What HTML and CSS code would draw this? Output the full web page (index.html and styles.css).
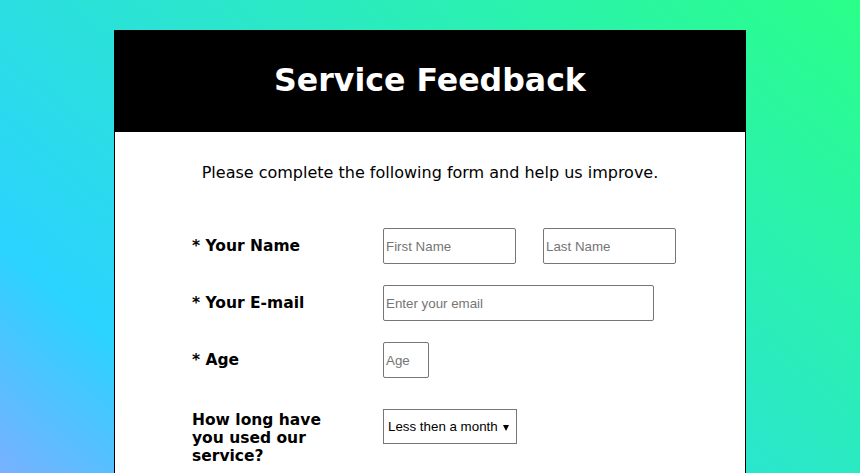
FILE: index.html
```html
<!DOCTYPE html>
<html lang="en">
<head>
<meta charset="utf-8">
<title>Service Feedback</title>
<link rel="stylesheet" href="styles.css">
</head>
<body>
<div class="card">
  <header class="card-header">
    <h1 class="title">Service Feedback</h1>
  </header>
  <p class="intro">Please complete the following form and help us improve.</p>
  <form class="form">
    <div class="row">
      <label class="label">* Your Name</label>
      <div class="fields">
        <input class="input input-name" type="text" placeholder="First Name">
        <input class="input input-name" type="text" placeholder="Last Name">
      </div>
    </div>
    <div class="row">
      <label class="label">* Your E-mail</label>
      <div class="fields">
        <input class="input input-email" type="email" placeholder="Enter your email">
      </div>
    </div>
    <div class="row">
      <label class="label">* Age</label>
      <div class="fields">
        <input class="input input-age" type="text" placeholder="Age">
      </div>
    </div>
    <div class="row row-top">
      <label class="label label-wrap">How long have you used our service?</label>
      <div class="fields">
        <div class="select-wrap">
          <select class="select">
            <option>Less then a month</option>
            <option>1-6 months</option>
            <option>More than 6 months</option>
          </select>
          <svg class="select-arrow" width="6" height="6" viewBox="0 0 6 6"><path d="M0 0H6L3 6Z" fill="#000"/></svg>
        </div>
      </div>
    </div>
  </form>
</div>
</body>
</html>
```
FILE: styles.css
```css
html {
  min-height: 100%;
  background: linear-gradient(40deg, #78b0ff 0%, #2bd3ff 19%, #2aff88 100%) fixed;
}
body {
  margin: 0;
  font-family: Verdana, "DejaVu Sans", sans-serif;
}
.card {
  width: 630px;
  margin: 30px auto 0;
  background: #fff;
  border: 1px solid #000;
  border-top: 0;
  padding-bottom: 60px;
}
.card-header {
  background: #000;
  height: 102px;
  margin: 0 -1px;
  display: flex;
  align-items: center;
  justify-content: center;
}
.title {
  margin: 0;
  color: #fff;
  font-size: 31.6px;
  font-weight: bold;
  padding-bottom: 2px;
}
.intro {
  margin: 30px 0 0;
  text-align: center;
  font-size: 16px;
  line-height: 22px;
  color: #000;
}
.form {
  margin-top: 44px;
  padding-left: 77px;
  display: flex;
  flex-direction: column;
  gap: 21px;
}
.row {
  display: flex;
  align-items: center;
}
.row-top {
  align-items: flex-start;
  margin-top: 10px;
}
.label {
  width: 191px;
  flex: none;
  font-size: 15.5px;
  font-weight: bold;
  line-height: 18px;
}
.label-wrap {
  width: 135px;
  margin-right: 56px;
  padding-top: 2px;
}
.fields {
  display: flex;
  gap: 27px;
}
.input {
  box-sizing: border-box;
  height: 36px;
  border: 1px solid #767676;
  border-radius: 2px;
  padding: 0 2px;
  font-family: Arial, "Liberation Sans", sans-serif;
  font-size: 13.33px;
  color: #000;
  background: #fff;
  margin: 0;
}
.input::placeholder {
  color: #757575;
}
.input-name { width: 133px; }
.input-email { width: 271px; }
.input-age { width: 46px; }
.select-wrap {
  position: relative;
}
.select {
  appearance: none;
  -webkit-appearance: none;
  box-sizing: border-box;
  width: 134px;
  height: 35px;
  border: 1px solid #767676;
  border-radius: 0;
  padding: 0 0 0 4px;
  margin: 0;
  background: #fff;
  font-family: Arial, "Liberation Sans", sans-serif;
  font-size: 13.33px;
  color: #000;
}
.select-arrow {
  position: absolute;
  right: 8px;
  top: 16px;
  pointer-events: none;
}
```
